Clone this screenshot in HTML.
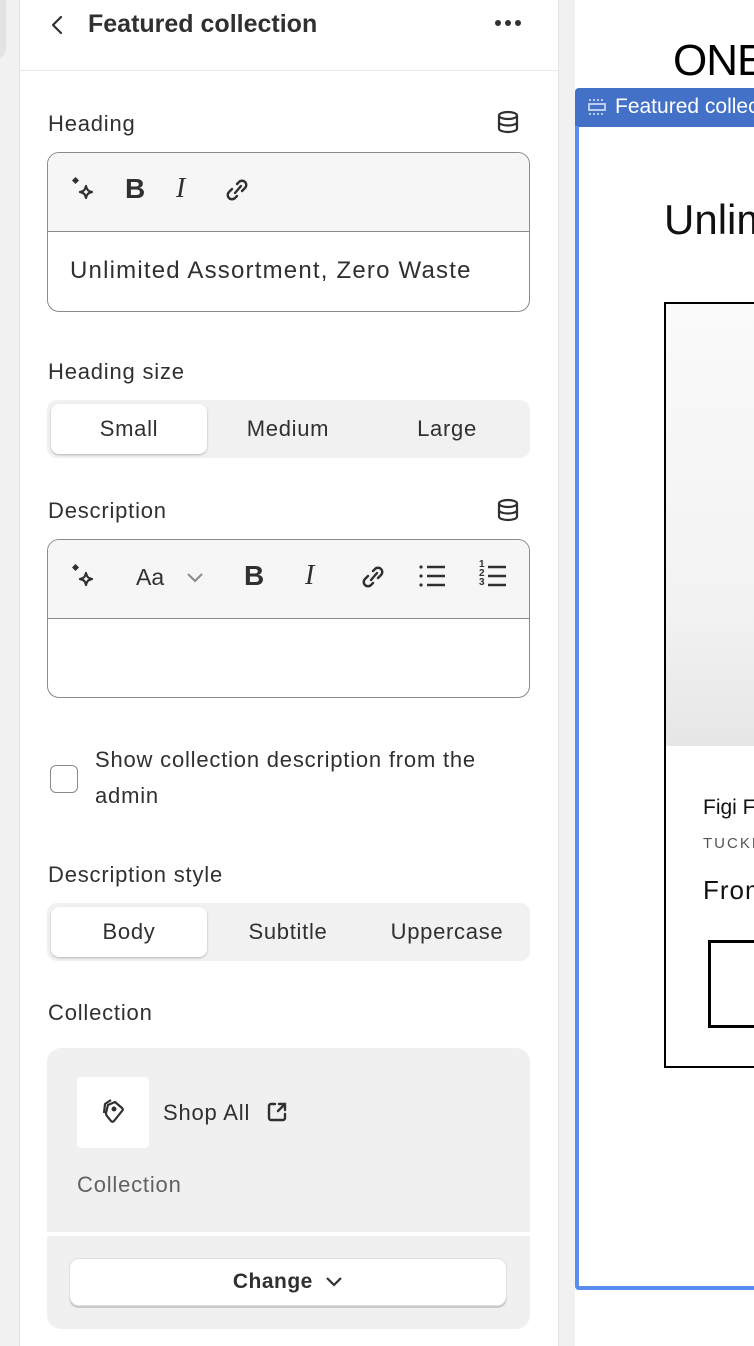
<!DOCTYPE html>
<html><head><style>
*{box-sizing:border-box;margin:0;padding:0}
body{width:754px;height:1346px;overflow:hidden;background:#f1f1f1;font-family:"Liberation Sans",sans-serif;color:#303030;position:relative}
.abs{position:absolute}
.panel{left:19px;top:0;width:540px;height:1346px;background:#fff;border-left:1px solid #e3e3e3;border-right:1px solid #e3e3e3}
.lbl{font-size:22px;letter-spacing:0.8px;color:#303030;position:absolute;left:48px}
.box{position:absolute;left:47px;width:483px;border:1px solid #8a8a8a;border-radius:12px;overflow:hidden;background:#fff}
.tb{height:79px;background:#f6f6f6;border-bottom:1px solid #8a8a8a;position:relative}
.seg{position:absolute;left:47px;width:483px;height:58px;background:#f1f1f1;border-radius:10px}
.seg div{position:absolute;top:4px;height:50px;line-height:50px;text-align:center;font-size:22px;letter-spacing:0.7px;width:156px}
.seg .on{background:#fff;border-radius:8px;box-shadow:0 1px 2px rgba(0,0,0,.25)}
.ic{position:absolute;top:22px}
</style></head><body>
<div class="abs" style="left:-10px;top:0;width:16px;height:60px;background:#e3e3e3;border-radius:0 0 12px 0"></div>
<div class="abs panel"></div>
<div class="abs" style="left:20px;top:70px;width:538px;height:1px;background:#e8e8e8"></div>
<svg class="abs" style="left:48px;top:14px" width="18" height="22" viewBox="0 0 18 22"><path d="M13 3 5 11l8 8" fill="none" stroke="#303030" stroke-width="2.2" stroke-linecap="round" stroke-linejoin="round"/></svg>
<div class="abs" style="left:88px;top:10px;font-size:25px;font-weight:bold;color:#303030">Featured collection</div>
<svg class="abs" style="left:494px;top:19px" width="28" height="8" viewBox="0 0 28 8" fill="#303030"><circle cx="4" cy="4" r="3"/><circle cx="14" cy="4" r="3"/><circle cx="24" cy="4" r="3"/></svg>

<div class="lbl" style="top:111px">Heading</div>
<svg class="abs" style="left:496px;top:110px" width="24" height="24" viewBox="0 0 24 24" fill="none" stroke="#303030" stroke-width="2.2"><ellipse cx="12" cy="5.5" rx="9" ry="3.5"/><path d="M3 5.5v13c0 2 4 3.5 9 3.5s9-1.5 9-3.5v-13M3 12c0 2 4 3.5 9 3.5s9-1.5 9-3.5"/></svg>
<div class="box" style="top:152px;height:160px">
 <div class="tb">
  <svg class="ic" style="left:24px;top:24px" width="26" height="28" viewBox="0 0 26 28"><rect x="1" y="1" width="5" height="5" transform="rotate(45 3.5 3.5)" fill="#303030"/><path d="M14 9c1 4 2 5 6 6-4 1-5 2-6 6-1-4-2-5-6-6 4-1 5-2 6-6z" fill="none" stroke="#303030" stroke-width="2.2" stroke-linejoin="round"/></svg>
  <div class="abs" style="left:77px;top:20px;font-size:28px;font-weight:bold">B</div>
  <div class="abs" style="left:128px;top:20px;font-size:28px;font-style:italic;font-family:'Liberation Serif',serif">I</div>
  <svg class="ic" style="left:175px" width="28" height="30" viewBox="0 0 28 30" fill="none" stroke="#303030" stroke-width="2.4" stroke-linecap="round"><path d="M12 18l6-7M14 9l2-2a4 4 0 016 6l-3 3M14 21l-2 2a4 4 0 01-6-6l3-3"/></svg>
 </div>
 <div style="padding:25px 0 0 22px;font-size:24px;letter-spacing:1.2px;color:#303030;white-space:nowrap">Unlimited Assortment, Zero Waste</div>
</div>

<div class="lbl" style="top:359px">Heading size</div>
<div class="seg" style="top:400px"><div class="on" style="left:4px">Small</div><div style="left:163px">Medium</div><div style="left:322px">Large</div></div>

<div class="lbl" style="top:498px">Description</div>
<svg class="abs" style="left:496px;top:498px" width="24" height="24" viewBox="0 0 24 24" fill="none" stroke="#303030" stroke-width="2.2"><ellipse cx="12" cy="5.5" rx="9" ry="3.5"/><path d="M3 5.5v13c0 2 4 3.5 9 3.5s9-1.5 9-3.5v-13M3 12c0 2 4 3.5 9 3.5s9-1.5 9-3.5"/></svg>
<div class="box" style="top:539px;height:159px">
 <div class="tb">
  <svg class="ic" style="left:24px;top:24px" width="26" height="28" viewBox="0 0 26 28"><rect x="1" y="1" width="5" height="5" transform="rotate(45 3.5 3.5)" fill="#303030"/><path d="M14 9c1 4 2 5 6 6-4 1-5 2-6 6-1-4-2-5-6-6 4-1 5-2 6-6z" fill="none" stroke="#303030" stroke-width="2.2" stroke-linejoin="round"/></svg>
  <div class="abs" style="left:88px;top:24px;font-size:23px">Aa</div>
  <svg class="ic" style="left:138px;top:32px" width="18" height="12" viewBox="0 0 18 12"><path d="M2 2l7 7 7-7" fill="none" stroke="#8a8a8a" stroke-width="2"/></svg>
  <div class="abs" style="left:196px;top:20px;font-size:28px;font-weight:bold">B</div>
  <div class="abs" style="left:257px;top:20px;font-size:28px;font-style:italic;font-family:'Liberation Serif',serif">I</div>
  <svg class="ic" style="left:311px" width="28" height="30" viewBox="0 0 28 30" fill="none" stroke="#303030" stroke-width="2.4" stroke-linecap="round"><path d="M12 18l6-7M14 9l2-2a4 4 0 016 6l-3 3M14 21l-2 2a4 4 0 01-6-6l3-3"/></svg>
  <svg class="ic" style="left:370px;top:24px" width="30" height="24" viewBox="0 0 30 24" stroke="#303030" stroke-width="2.4"><circle cx="3" cy="3" r="1.6" fill="#303030" stroke="none"/><circle cx="3" cy="12" r="1.6" fill="#303030" stroke="none"/><circle cx="3" cy="21" r="1.6" fill="#303030" stroke="none"/><path d="M9 3h18M9 12h18M9 21h18"/></svg>
  <div class="abs" style="left:431px;top:20px;font-size:10px;line-height:9px;font-weight:bold">1<br>2<br>3</div>
  <svg class="ic" style="left:438px;top:24px" width="22" height="24" viewBox="0 0 22 24" stroke="#303030" stroke-width="2.4"><path d="M2 3h18M2 12h18M2 21h18"/></svg>
 </div>
</div>

<div class="abs" style="left:50px;top:765px;width:28px;height:28px;border:1.5px solid #8a8a8a;border-radius:6px;background:#fff"></div>
<div class="abs" style="left:95px;top:742px;width:420px;font-size:22px;letter-spacing:0.8px;line-height:36px">Show collection description from the admin</div>

<div class="lbl" style="top:862px">Description style</div>
<div class="seg" style="top:903px"><div class="on" style="left:4px">Body</div><div style="left:163px">Subtitle</div><div style="left:322px">Uppercase</div></div>

<div class="lbl" style="top:1000px">Collection</div>
<div class="abs" style="left:47px;top:1048px;width:483px;height:281px;background:#f0f0f0;border-radius:14px;overflow:hidden">
 <div class="abs" style="left:0;top:184px;width:483px;height:4px;background:#fff"></div>
 <div class="abs" style="left:30px;top:29px;width:72px;height:71px;background:#fff;border-radius:4px"></div>
 <svg class="abs" style="left:48px;top:46px" width="34" height="36" viewBox="0 0 34 36" fill="none" stroke="#303030" stroke-width="2.2" stroke-linejoin="round"><path d="M20 8l7 6c1 1 1 2 0 3l-8 10c-1 1-2 1-3 0l-4-5c-1-1-1-2-1-3l2-8 7-3z"/><circle cx="19" cy="15" r="1.4" fill="#303030"/><path d="M9 19l1-9 6-4"/></svg>
 <div class="abs" style="left:116px;top:52px;font-size:22px;letter-spacing:0.8px">Shop All</div>
 <svg class="abs" style="left:219px;top:53px" width="22" height="22" viewBox="0 0 22 22" fill="none" stroke="#303030" stroke-width="2.4" stroke-linecap="round"><path d="M9 3H5a2 2 0 00-2 2v12a2 2 0 002 2h12a2 2 0 002-2v-4M12 10l7-7M13 3h6v6"/></svg>
 <div class="abs" style="left:30px;top:124px;font-size:22px;letter-spacing:0.8px;color:#616161">Collection</div>
 <div class="abs" style="left:22px;top:210px;width:438px;height:48px;background:#fff;border-radius:10px;border:1px solid #e0e0e0;box-shadow:0 2px 0 #c9c9c9;text-align:center;line-height:46px;font-size:21px;letter-spacing:0.5px;font-weight:bold">Change <svg width="18" height="12" viewBox="0 0 18 12" style="margin-left:6px"><path d="M2 2l7 7 7-7" fill="none" stroke="#303030" stroke-width="2.2"/></svg></div>
</div>

<!-- preview -->
<div class="abs" style="left:575px;top:0;width:179px;height:1346px;background:#fff;overflow:hidden">
<div class="abs" style="left:98px;top:36px;font-size:44px;color:#000;letter-spacing:-1px">ONE</div>
<div class="abs" style="left:0;top:88px;width:179px;height:39px;background:#4371c7;border-radius:4px 0 0 0"></div>
<svg class="abs" style="left:12px;top:97px" width="20" height="20" viewBox="0 0 20 20" fill="none" stroke="#c9d6f2" stroke-width="1.8"><path d="M2 3h16M2 17h16" stroke-dasharray="2 2"/><rect x="2" y="7" width="16" height="6"/></svg>
<div class="abs" style="left:40px;top:95px;font-size:21px;color:#fff;white-space:nowrap">Featured collection</div>
<div class="abs" style="left:0;top:126px;width:190px;height:1164px;border:4px solid #5b8def;border-right:none;border-top:none;border-radius:0 0 0 4px"></div>
<div class="abs" style="left:89px;top:196px;font-size:42px;color:#111;white-space:nowrap">Unlimited</div>
<div class="abs" style="left:89px;top:302px;width:100px;height:766px;border:2px solid #000;border-right:none;overflow:hidden">
 <div style="height:442px;background:linear-gradient(#fafafa,#f2f2f2 70%,#e6e6e6)"></div>
</div>
<div class="abs" style="left:128px;top:796px;font-size:21px;color:#111;white-space:nowrap">Figi Flower</div>
<div class="abs" style="left:128px;top:835px;font-size:15px;color:#555;letter-spacing:2px">TUCKER</div>
<div class="abs" style="left:128px;top:875px;font-size:26px;color:#111;letter-spacing:1px">From</div>
<div class="abs" style="left:133px;top:940px;width:60px;height:88px;border:3px solid #000;border-right:none"></div>
</div>
</body></html>
